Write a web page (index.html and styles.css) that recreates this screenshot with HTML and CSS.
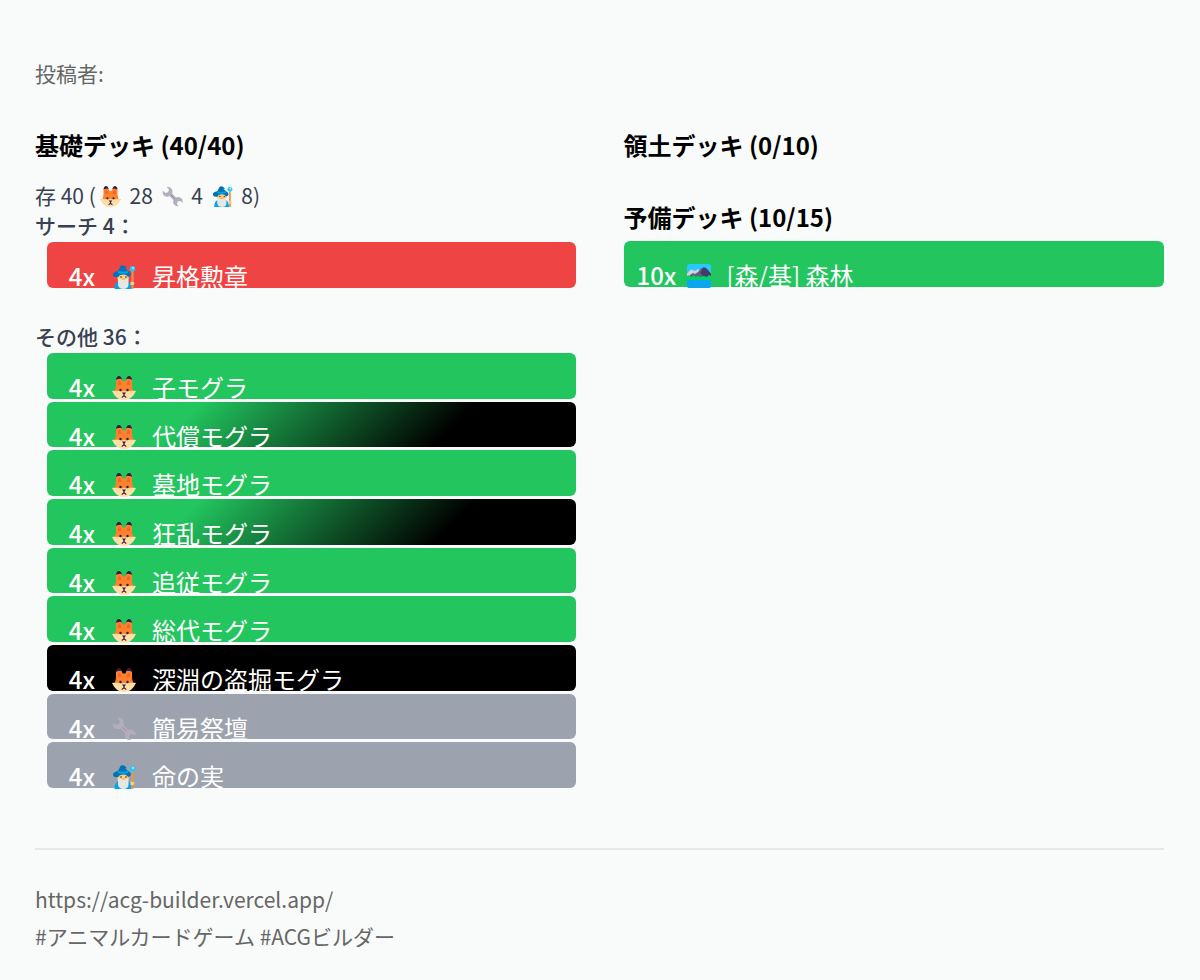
FILE: index.html
```html
<!DOCTYPE html>
<html lang="ja">
   <head>
      <meta charset="UTF-8">
      <meta name="viewport" content="width=device-width, initial-scale=1.0"/>
      <title>ACGビルダー</title>
      <link rel="stylesheet" href="styles.css">
   </head>
   <body>
      <svg class="sprite" aria-hidden="true">
         <symbol id="fox" viewBox="0 0 24 24">
            <path fill="#ff822d" d="M4 10V4.500Q4.500 1 7 1Q9.500 1 10.500 5.500H13.500Q14.500 1 17 1Q19.500 1 20 4.500V10L21 14.500L24 15Q20 19 12 19Q4 19 0 15L3 14.500Z"/>
            <path fill="#f4662c" d="M6 9Q5.500 5 7.500 4.500Q9.500 5.500 9.500 9ZM14.500 9Q14.500 5.500 16.500 4.500Q18.500 5 18 9Z"/>
            <path fill="#321b41" d="M4 4Q4.500 0 7 0Q9 0 10 3.500Q8.500 2.500 7 3Q5 3 4 4ZM14 3.500Q15 0 17 0Q19.500 0 20 4Q19 3 17 3Q15.500 2.500 14 3.500Z"/>
            <path fill="#ffdea7" d="M0 15Q4 14.500 8 15Q10.500 16 12 14.500Q13.500 16 16 15Q20 14.500 24 15Q20 24 12 24Q4 24 0 15Z"/>
            <circle cx="8.500" cy="14" r="1.200" fill="#321b41"/>
            <circle cx="15.500" cy="14" r="1.200" fill="#321b41"/>
            <path fill="#321b41" d="M10 16.500H14L12.600 18.500V19.500L14.500 21L14 22L12 20.500L10 22L9.500 21L11.400 19.500V18.500Z"/>
         </symbol>
         <symbol id="wrench" viewBox="0 0 24 24">
            <path fill="#b3aebc" d="M5.500 1L8 4L7 7L4 8L1 5.500Q0 11 4.500 12Q7 12.500 8.500 11.500L13 16Q12 19 14 21.500Q16 23.500 19 23L17 20.500L18 17.500L21 17L23.500 19Q24 15 21 13.500Q18.500 12 16 13L11.500 8.500Q12.500 6 11.500 4Q9 0 5.500 1Z"/>
            <path fill="none" stroke="#998ea4" stroke-width="1" d="M10 10L14.500 14.500"/>
         </symbol>
         <symbol id="mage" viewBox="0 0 24 24">
            <path fill="#00a6ed" d="M2.500 24Q2.500 17 7 16H16Q19 17 19.500 24Z"/>
            <path fill="#ffce7c" d="M4 9H18L16 15Q11.500 18 6 15Z"/>
            <path fill="#e6e6e6" d="M6 13.500L9 14H14L16.500 13.500V20Q16 24 11.500 24Q7 24 6 20Z"/>
            <path fill="#f3ad61" d="M9 14Q11.500 12.500 14 14Q11.500 15.500 9 14Z"/>
            <path fill="#0074ba" d="M1 9.500Q1 7 6 6L8.500 1Q10 -.5 13 1L15 3.500L13 3L16 6Q19 7 19 10Q18 12 16 12Q15 9.500 11.500 9.500Q7 9.500 6.500 12Q1 13 1 9.500Z"/>
            <path fill="#00a6ed" d="M6 6Q11 7.500 16 6V8Q11 9.500 6 8Z"/>
            <circle cx="9" cy="12" r=".8" fill="#45342d"/>
            <circle cx="14" cy="12" r=".8" fill="#45342d"/>
            <path fill="#e6974c" d="M19.500 6H21.500V24H19.500Z"/>
            <path fill="#ffce7c" d="M18.500 17Q22.500 16 22.500 19Q20 21 18.500 20Z"/>
            <circle cx="20.500" cy="3.800" r="2.800" fill="#26c9fc"/>
            <circle cx="21" cy="3" r="1" fill="#a9f2ff"/>
         </symbol>
         <symbol id="park" viewBox="0 0 24 24">
            <rect width="24" height="24" rx="2.500" fill="#26c9fc"/>
            <path fill="#d3d3d9" d="M0 10Q2 6 5 5.500L8 7L11 5L14 8V13H0Z"/>
            <path fill="#636080" d="M3 11L6 9L8 10L11 8L14 4.500L17 3L20 5L24 10V13H3Z"/>
            <path fill="#433b6b" d="M13 9L16 4L18 3.500L21 6L24 10V13H17Z"/>
            <path fill="#00d26a" d="M0 12L2 11L4 13L7 11.500L9 13L11 12L14 13L17 12L20 13L22 11L24 12V16H0Z"/>
            <path fill="#0aa6ee" d="M0 16H24V21.500Q24 24 21.500 24H2.500Q0 24 0 21.500Z"/>
         </symbol>
      </svg>

      <header class="author">投稿者:</header>

      <main class="decks">
         <section>
            <h2>基礎デッキ (40/40)</h2>
            <p class="summary">
               存 40 (<svg class="icon-small" role="img" aria-label="動物"><use href="#fox"/></svg> 28
               <svg class="icon-small" role="img" aria-label="道具"><use href="#wrench"/></svg> 4
               <svg class="icon-small" role="img" aria-label="術"><use href="#mage"/></svg> 8)
            </p>

            <h3>サーチ 4：</h3>
            <ul class="cards indented">
               <li class="card red"><b class="count">4x</b><svg class="icon"><use href="#mage"/></svg><span>昇格勲章</span></li>
            </ul>

            <h3 class="others">その他 36：</h3>
            <ul class="cards indented full">
               <li class="card green"><b class="count">4x</b><svg class="icon"><use href="#fox"/></svg><span>子モグラ</span></li>
               <li class="card green-black"><b class="count">4x</b><svg class="icon"><use href="#fox"/></svg><span>代償モグラ</span></li>
               <li class="card green"><b class="count">4x</b><svg class="icon"><use href="#fox"/></svg><span>墓地モグラ</span></li>
               <li class="card green-black"><b class="count">4x</b><svg class="icon"><use href="#fox"/></svg><span>狂乱モグラ</span></li>
               <li class="card green"><b class="count">4x</b><svg class="icon"><use href="#fox"/></svg><span>追従モグラ</span></li>
               <li class="card green"><b class="count">4x</b><svg class="icon"><use href="#fox"/></svg><span>総代モグラ</span></li>
               <li class="card black"><b class="count">4x</b><svg class="icon"><use href="#fox"/></svg><span>深淵の盗掘モグラ</span></li>
               <li class="card gray"><b class="count">4x</b><svg class="icon"><use href="#wrench"/></svg><span>簡易祭壇</span></li>
               <li class="card gray"><b class="count">4x</b><svg class="icon"><use href="#mage"/></svg><span>命の実</span></li>
            </ul>
         </section>

         <section>
            <h2 class="territory">領土デッキ (0/10)</h2>
            <h2 class="side">予備デッキ (10/15)</h2>
            <ul class="cards">
               <li class="card green"><b class="count">10x</b><svg class="icon"><use href="#park"/></svg><span>[森/基] 森林</span></li>
            </ul>
         </section>
      </main>

      <footer>
         <a href="https://acg-builder.vercel.app/">https://acg-builder.vercel.app/</a>
         <p>#アニマルカードゲーム #ACGビルダー</p>
      </footer>
   </body>
</html>
```
FILE: styles.css
```css
*
{
   box-sizing: border-box;
   margin: 0;
   padding: 0;
}

body
{
   padding: 58px 36px 24px 35px;
   background: #f9fbfa;
   color: #374151;
   font-family: "Noto Sans CJK JP", sans-serif;
   font-size: 21px;
   line-height: 30px;
}

.sprite
{
   display: none;
}

.author
{
   margin-bottom: 39px;
   color: #666666;
}

.decks
{
   display: grid;
   grid-template-columns: 1fr 1fr;
   gap: 48px;
}

h2
{
   margin-bottom: 17px;
   color: #000000;
   font-size: 24px;
   line-height: 36px;
}

h2.territory
{
   margin-bottom: 36px;
}

h2.side
{
   margin-bottom: 6px;
}

h3
{
   margin-bottom: 2px;
   font-size: 21px;
   font-weight: 500;
}

.others
{
   margin-top: 33px;
}

.icon-small
{
   width: 21px;
   height: 21px;
   margin: 0 4px;
   vertical-align: -3px;
}

.cards
{
   display: grid;
   grid-auto-rows: minmax(0, 1fr);
   gap: 3px;
   height: 46px;
   list-style: none;
}

.indented
{
   padding-left: 12px;
}

.indented .card
{
   padding-left: 15px;
}

/* nine rows share the height evenly */
.full
{
   height: 435px;
}

.card
{
   display: flex;
   align-items: flex-start;
   padding: 16px 13px 0;
   border-radius: 6px;
   color: #ffffff;
   font-size: 24px;
   line-height: 36px;
   white-space: nowrap;
}

.count
{
   width: 40px;
   font-weight: 500;
   text-align: center;
}

.icon
{
   flex: none;
   width: 24px;
   height: 24px;
   margin: 7px 16px 0 10px;
}

.red
{
   background: #ef4444;
}

.green
{
   background: #22c55e;
}

.green-black
{
   background: linear-gradient(135deg, #22c55e 27%, #000000 75%);
}

.black
{
   background: #000000;
}

.gray
{
   background: #9ca3af;
}

footer
{
   margin-top: 60px;
   padding-top: 31px;
   border-top: 2px solid #e5e7e7;
   color: #666666;
   line-height: 37px;
}

footer a
{
   color: inherit;
   text-decoration: none;
}
```
